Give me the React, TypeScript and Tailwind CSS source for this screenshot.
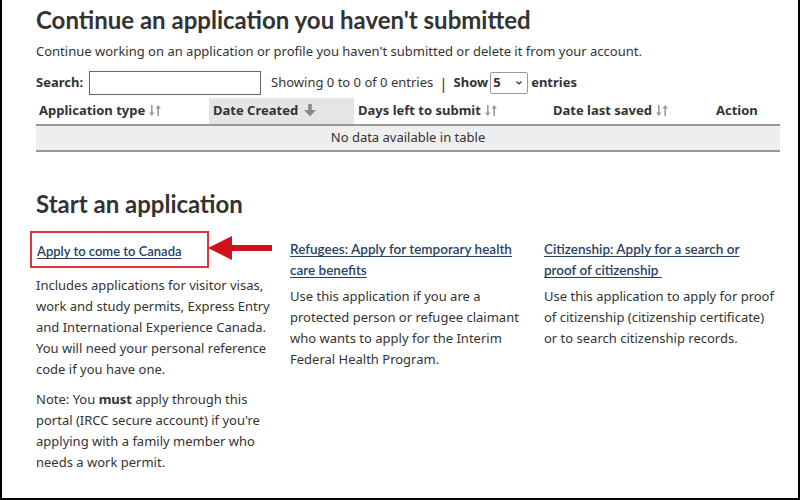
import React from "react";

const body = { fontFamily: '"Noto Sans", "Open Sans", sans-serif' };
const head = { fontFamily: 'Lato, "Noto Sans", sans-serif' };

function SortBoth() {
  return (
    <svg width="12" height="13" viewBox="0 0 12 13" className="inline-block ml-1 -mt-0.5" fill="#9a9a9a">
      <rect x="2" y="1" width="1.6" height="9" />
      <path d="M0 8.5h5.6L2.8 12z" />
      <rect x="8.4" y="3" width="1.6" height="9" />
      <path d="M6.4 4.5h5.6L9.2 1z" />
    </svg>
  );
}

function SortDown() {
  return (
    <svg width="12" height="13" viewBox="0 0 12 13" className="inline-block ml-1.5 -mt-0.5" fill="#8a8a8a">
      <rect x="4.2" y="0" width="3.6" height="7" />
      <path d="M0 6h12L6 12.5z" />
    </svg>
  );
}

function Arrow() {
  return (
    <svg width="64" height="24" viewBox="0 0 64 24" className="shrink-0">
      <rect x="20" y="9" width="44" height="6" fill="#d0101b" />
      <path d="M0 12L24 0v24z" fill="#d0101b" />
    </svg>
  );
}

export default function App() {
  return (
    <div className="w-[800px] h-[500px] bg-white border-x-2 border-b-2 border-black overflow-hidden text-[#333]" style={body}>
      <div className="pl-[34px] pr-[20px] pt-[3px]">
        <h2 className="text-[24px] font-bold leading-[34px] text-[#333]" style={head}>
          Continue an application you haven't submitted
        </h2>
        <p className="text-[13px] leading-[20px] mt-[4px]">
          Continue working on an application or profile you haven't submitted or delete it from your account.
        </p>

        <div className="flex items-center mt-[9px] text-[13px] h-[26px]">
          <span className="font-bold">Search:</span>
          <input className="ml-[6px] w-[172px] h-[24px] border border-[#666] outline-none" />
          <span className="ml-[10px]">Showing 0 to 0 of 0 entries</span>
          <span className="ml-[6px] text-[15px]">|</span>
          <span className="ml-[6px] font-bold">Show</span>
          <span className="ml-[2px] w-[38px] h-[22px] border border-[#999] rounded-[2px] flex items-center justify-between px-[2px] font-bold">
            5
            <svg width="8" height="6" viewBox="0 0 8 6" className="mr-[2px]">
              <path d="M1.5 1.5L4 4l2.5-2.5" stroke="#333" strokeWidth="1.2" fill="none" />
            </svg>
          </span>
          <span className="ml-[3px] font-bold">entries</span>
        </div>

        <table className="w-[744px] mt-[2px] text-[13px] border-collapse">
          <thead>
            <tr className="h-[27px] border-b-2 border-[#999] font-bold text-left">
              <th className="w-[173px] pl-[3px] font-bold">Application type<SortBoth /></th>
              <th className="w-[145px] pl-[4px] bg-[#e5e5e5] font-bold">Date Created<SortDown /></th>
              <th className="w-[196px] pl-[4px] font-bold">Days left to submit<SortBoth /></th>
              <th className="w-[163px] pl-[3px] font-bold">Date last saved<SortBoth /></th>
              <th className="pl-[3px] font-bold">Action</th>
            </tr>
          </thead>
          <tbody>
            <tr className="h-[26px] bg-[#eeeeee] border-b-2 border-[#999]">
              <td colSpan={5} className="text-center">No data available in table</td>
            </tr>
          </tbody>
        </table>

        <h2 className="text-[24px] font-bold leading-[34px] mt-[35px] text-[#333]" style={head}>
          Start an application
        </h2>

        <div className="grid grid-cols-3 w-[762px] mt-[10px]">
          <div className="pr-[20px]">
            <div className="flex items-center">
              <span className="shrink-0 whitespace-nowrap border-2 border-[#d9363e] pl-[5px] pr-[25px] pt-[5px] pb-[4px] -ml-[6px]">
                <a className="text-[13px] leading-[20px] font-semibold text-[#284162] underline underline-offset-2" style={head} href="#">
                  Apply to come to Canada
                </a>
              </span>
              <span className="-ml-[1px] -mt-[4px]"><Arrow /></span>
            </div>
            <p className="text-[13px] leading-[21px] mt-[7px]">
              Includes applications for visitor visas, work and study permits, Express Entry and International Experience Canada. You will need your personal reference code if you have one.
            </p>
            <p className="text-[13px] leading-[21px] mt-[9px]">
              Note: You <b>must</b> apply through this portal (IRCC secure account) if you're applying with a family member who needs a work permit.
            </p>
          </div>
          <div className="pr-[20px]">
            <a className="block w-[226px] text-[13.5px] leading-[21px] font-semibold text-[#284162] underline underline-offset-2 pt-[8px]" style={head} href="#">
              Refugees: Apply for temporary health care benefits
            </a>
            <p className="text-[13px] leading-[21px] mt-[5px]">
              Use this application if you are a protected person or refugee claimant who wants to apply for the Interim Federal Health Program.
            </p>
          </div>
          <div className="pr-[20px]">
            <a className="block w-[226px] text-[13.5px] leading-[21px] font-semibold text-[#284162] underline underline-offset-2 pt-[8px]" style={head} href="#">
              Citizenship: Apply for a search or proof of citizenship&nbsp;
            </a>
            <p className="text-[13px] leading-[21px] mt-[5px]">
              Use this application to apply for proof of citizenship (citizenship certificate) or to search citizenship records.
            </p>
          </div>
        </div>
      </div>
    </div>
  );
}
